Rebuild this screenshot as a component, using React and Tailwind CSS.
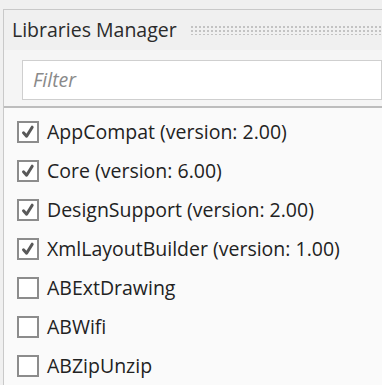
const libraries = [
    { name: 'AppCompat (version: 2.00)', checked: true },
    { name: 'Core (version: 6.00)', checked: true },
    { name: 'DesignSupport (version: 2.00)', checked: true },
    { name: 'XmlLayoutBuilder (version: 1.00)', checked: true },
    { name: 'ABExtDrawing', checked: false },
    { name: 'ABWifi', checked: false },
    { name: 'ABZipUnzip', checked: false },
];

function Checkbox({ checked }) {
    return (
        <span className="w-[22px] h-[22px] shrink-0 border-2 border-[#8c8c8c] bg-white flex items-center justify-center">
            {checked && (
                <svg width="14" height="14" viewBox="0 0 14 14">
                    <path d="M2.5 7.8 L5.6 11.2 L11.2 2.2" fill="none" stroke="#595959" strokeWidth="3" strokeLinecap="round" strokeLinejoin="round" />
                </svg>
            )}
        </span>
    );
}

export default function App() {
    return (
        <div className="w-[382px] h-[385px] bg-[#f0f0f0] pt-[9px] pl-[3px] overflow-hidden font-['Open_Sans',sans-serif] text-[#222]">
            <div className="h-full border-t border-l border-[#c9c9c9] flex flex-col">
                {/* Title bar */}
                <div className="h-[40px] flex items-center pl-[8px] bg-[#f0f0f0] shrink-0">
                    <span className="text-[19.5px] text-[#2b2b2b] whitespace-nowrap">Libraries Manager</span>
                    <div className="flex-1 ml-[13px] h-[10px] bg-[radial-gradient(#b8b8b8_1px,transparent_1.2px)] bg-[length:4px_4px] opacity-80" />
                </div>

                {/* Filter */}
                <div className="h-[58px] bg-[#f5f5f5] pl-[18px] pt-[10px] shrink-0 border-b-2 border-[#bdbdbd]">
                    <div className="h-[40px] border border-[#cfcfcf] bg-white flex items-center px-[10px]">
                        <span className="italic text-[19.5px] text-[#8a8a8a]">Filter</span>
                    </div>
                </div>

                {/* List */}
                <div className="flex-1 bg-[#fafafa] pt-[4px]">
                    {libraries.map((lib) => (
                        <div key={lib.name} className="h-[39px] flex items-center pl-[13px] gap-[8px]">
                            <Checkbox checked={lib.checked} />
                            <span className="text-[19.5px] whitespace-nowrap">{lib.name}</span>
                        </div>
                    ))}
                </div>
            </div>
        </div>
    );
}
